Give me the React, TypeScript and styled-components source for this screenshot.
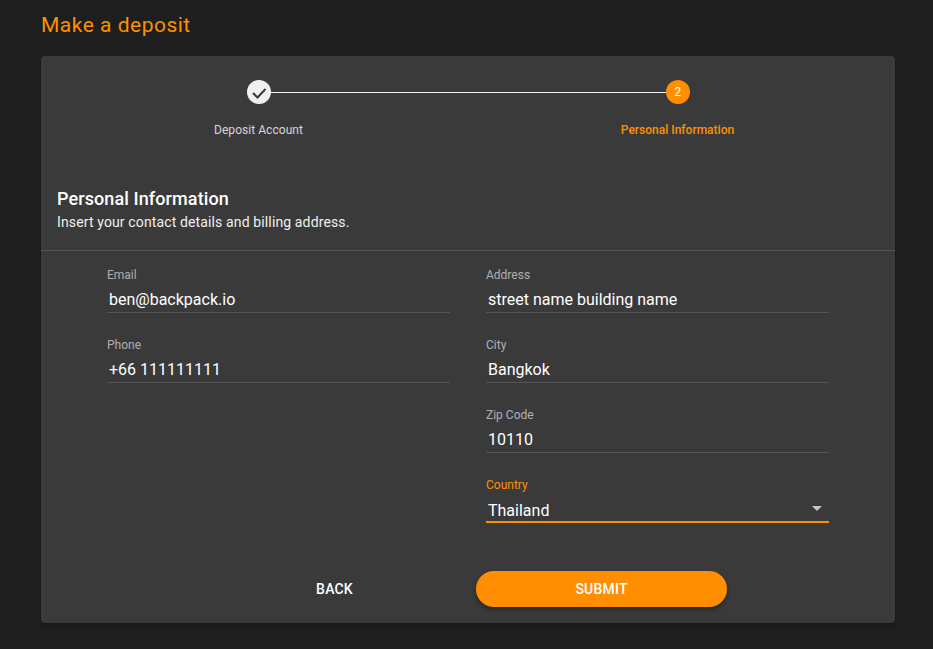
import * as React from 'react';
import styled, { createGlobalStyle } from 'styled-components';

const ORANGE = '#ff8f00';

const GlobalStyle = createGlobalStyle`
    html, body {
        margin: 0;
        padding: 0;
        background: #1e1e1e;
        font-family: Roboto, "Liberation Sans", sans-serif;
    }
`;

const Page = styled.div`
    height: 649px;
    box-sizing: border-box;
    padding: 11px 38px 0 41px;
    overflow: hidden;
`;

const Title = styled.h1`
    margin: 0 0 16px;
    height: 29px;
    line-height: 28px;
    font-size: 21px;
    font-weight: 400;
    letter-spacing: 0.5px;
    color: ${ORANGE};
`;

const Card = styled.main`
    height: 567px;
    background: #3a3a3a;
    border-radius: 4px;
    box-shadow: 0 1px 3px rgba(0, 0, 0, 0.3);
`;

const Stepper = styled.div`
    display: flex;
    padding: 24px 8px 0;
    height: 99px;
`;

const Step = styled.div`
    position: relative;
    flex: 1;
    display: flex;
    flex-direction: column;
    align-items: center;
`;

const Connector = styled.span`
    position: absolute;
    top: 12px;
    left: 50%;
    width: 100%;
    height: 1px;
    background: #f2f2f2;
`;

const StepIcon = styled.span<{ $active?: boolean }>`
    position: relative;
    width: 24px;
    height: 24px;
    border-radius: 50%;
    display: flex;
    align-items: center;
    justify-content: center;
    font-size: 12px;
    color: #fff;
    background: ${(p) => (p.$active ? ORANGE : '#f0f0f0')};
`;

const StepLabel = styled.span<{ $active?: boolean }>`
    margin-top: 18px;
    line-height: 16px;
    font-size: 12px;
    font-weight: ${(p) => (p.$active ? 500 : 400)};
    letter-spacing: ${(p) => (p.$active ? 0 : '0.05px')};
    color: ${(p) => (p.$active ? ORANGE : 'rgba(255, 255, 255, 0.8)')};
`;

const Section = styled.header`
    padding: 0 16px;
    height: 71px;
    border-bottom: 1px solid #555;
`;

const SectionTitle = styled.h2`
    margin: 0;
    padding-top: 7px;
    line-height: 26px;
    font-size: 18px;
    font-weight: 500;
    letter-spacing: 0.1px;
    color: #fff;
`;

const SectionText = styled.p`
    margin: 0;
    line-height: 20px;
    font-size: 14px;
    letter-spacing: 0.13px;
    color: #f0f0f0;
`;

const Form = styled.form`
    display: grid;
    grid-template-columns: 343px 343px;
    column-gap: 36px;
    padding: 16px 0 0 66px;
    box-sizing: border-box;
    height: 320px;
`;

const Column = styled.div`
    display: flex;
    flex-direction: column;
    gap: 24px;
`;

const Field = styled.label`
    display: block;
`;

const FieldLabel = styled.span<{ $focused?: boolean }>`
    display: block;
    line-height: 16px;
    font-size: 12px;
    color: ${(p) => (p.$focused ? ORANGE : 'rgba(255, 255, 255, 0.6)')};
`;

const FieldValue = styled.span<{ $focused?: boolean }>`
    display: flex;
    align-items: center;
    justify-content: space-between;
    box-sizing: border-box;
    height: 29px;
    margin-top: 1px;
    padding: ${(p) => (p.$focused ? '6px' : '3px')} 2px 0;
    line-height: 24px;
    font-size: 16px;
    color: #fff;
    border-bottom: ${(p) => (p.$focused ? `2px solid ${ORANGE}` : '1px solid #555')};
`;

const Caret = styled.span`
    width: 0;
    height: 0;
    margin: 0 5px 5px 0;
    border-left: 5px solid transparent;
    border-right: 5px solid transparent;
    border-top: 5px solid #c4c4c4;
`;

const Actions = styled.div`
    display: flex;
    justify-content: center;
    gap: 16px;
`;

const Button = styled.button<{ $primary?: boolean }>`
    width: 251px;
    height: 36px;
    border: 0;
    border-radius: 18px;
    font-family: inherit;
    font-size: 14px;
    font-weight: 500;
    letter-spacing: 0.2px;
    color: #fff;
    background: ${(p) => (p.$primary ? ORANGE : 'transparent')};
    box-shadow: ${(p) => (p.$primary ? '0 3px 5px rgba(0, 0, 0, 0.3)' : 'none')};
`;

const left = [
    { label: 'Email', value: 'ben@backpack.io' },
    { label: 'Phone', value: '+66 111111111' }
];

const right = [
    { label: 'Address', value: 'street name building name' },
    { label: 'City', value: 'Bangkok' },
    { label: 'Zip Code', value: '10110' }
];

export default function App() {
    return (
        <Page>
            <GlobalStyle />
            <Title>Make a deposit</Title>
            <Card>
                <Stepper>
                    <Step>
                        <Connector />
                        <StepIcon>
                            <svg width="16" height="16" viewBox="0 0 16 16" fill="none">
                                <path d="M2 9L6.5 13.5L14.5 5" stroke="#3a3a3a" strokeWidth="2" />
                            </svg>
                        </StepIcon>
                        <StepLabel>Deposit Account</StepLabel>
                    </Step>
                    <Step>
                        <StepIcon $active>2</StepIcon>
                        <StepLabel $active>Personal Information</StepLabel>
                    </Step>
                </Stepper>
                <Section>
                    <SectionTitle>Personal Information</SectionTitle>
                    <SectionText>Insert your contact details and billing address.</SectionText>
                </Section>
                <Form>
                    <Column>
                        {left.map((f) => (
                            <Field key={f.label}>
                                <FieldLabel>{f.label}</FieldLabel>
                                <FieldValue>{f.value}</FieldValue>
                            </Field>
                        ))}
                    </Column>
                    <Column>
                        {right.map((f) => (
                            <Field key={f.label}>
                                <FieldLabel>{f.label}</FieldLabel>
                                <FieldValue>{f.value}</FieldValue>
                            </Field>
                        ))}
                        <Field>
                            <FieldLabel $focused>Country</FieldLabel>
                            <FieldValue $focused>
                                Thailand
                                <Caret />
                            </FieldValue>
                        </Field>
                    </Column>
                </Form>
                <Actions>
                    <Button type="button">BACK</Button>
                    <Button type="button" $primary>SUBMIT</Button>
                </Actions>
            </Card>
        </Page>
    );
}
